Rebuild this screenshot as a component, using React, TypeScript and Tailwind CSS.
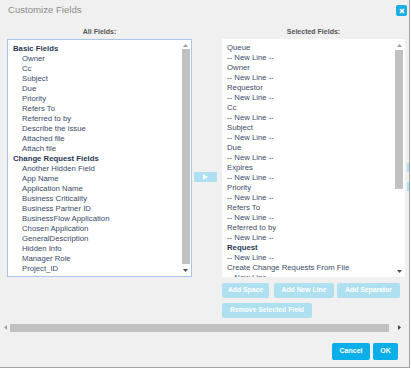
import React from "react";

const leftItems: { t: string; h?: boolean }[] = [
  { t: "Basic Fields", h: true },
  { t: "Owner" },
  { t: "Cc" },
  { t: "Subject" },
  { t: "Due" },
  { t: "Priority" },
  { t: "Refers To" },
  { t: "Referred to by" },
  { t: "Describe the issue" },
  { t: "Attached file" },
  { t: "Attach file" },
  { t: "Change Request Fields", h: true },
  { t: "Another Hidden Field" },
  { t: "App Name" },
  { t: "Application Name" },
  { t: "Business Criticality" },
  { t: "Business Partner ID" },
  { t: "BusinessFlow Application" },
  { t: "Chosen Application" },
  { t: "GeneralDescription" },
  { t: "Hidden Info" },
  { t: "Manager Role" },
  { t: "Project_ID" },
];

const rightItems: { t: string; b?: boolean }[] = [
  { t: "Queue" },
  { t: "-- New Line --" },
  { t: "Owner" },
  { t: "-- New Line --" },
  { t: "Requestor" },
  { t: "-- New Line --" },
  { t: "Cc" },
  { t: "-- New Line --" },
  { t: "Subject" },
  { t: "-- New Line --" },
  { t: "Due" },
  { t: "-- New Line --" },
  { t: "Expires" },
  { t: "-- New Line --" },
  { t: "Priority" },
  { t: "-- New Line --" },
  { t: "Refers To" },
  { t: "-- New Line --" },
  { t: "Referred to by" },
  { t: "-- New Line --" },
  { t: "Request", b: true },
  { t: "-- New Line --" },
  { t: "Create Change Requests From File" },
  { t: "-- New Line --" },
];

function Up() {
  return (
    <svg width="5" height="3" viewBox="0 0 5 3">
      <polygon points="0,3 5,3 2.5,0" fill="#a0a0a0" />
    </svg>
  );
}
function Down() {
  return (
    <svg width="5" height="3" viewBox="0 0 5 3">
      <polygon points="0,0 5,0 2.5,3" fill="#505050" />
    </svg>
  );
}

export default function App() {
  return (
    <div
      className="w-[411px] h-[369px] bg-white"
      style={{ fontFamily: '"Liberation Sans", Arial, sans-serif' }}
    >
      <div className="w-[410px] h-[368px] bg-[#f0f0f0] border-r border-b border-[#a3a3a3] overflow-hidden flex flex-col">
        {/* header */}
        <div className="h-[23px] shrink-0 flex items-start justify-between pl-[8px] pr-[2px]">
          <div className="mt-[4px] text-[9.6px] leading-[12px] text-[#8c8c8c]">
            Customize Fields
          </div>
          <div className="mt-[5px] w-[11px] h-[11px] shrink-0 rounded-[2px] bg-[#1aaee6] flex items-center justify-center">
            <svg width="6" height="6" viewBox="0 0 6 6">
              <path d="M1 1 L5 5 M5 1 L1 5" stroke="white" strokeWidth="1.6" />
            </svg>
          </div>
        </div>
        {/* column headers */}
        <div className="h-[16px] shrink-0 flex pl-[7px] text-[7px] font-bold text-[#555] leading-[17px]">
          <div className="w-[185px] shrink-0 text-center">All Fields:</div>
          <div className="w-[30px] shrink-0" />
          <div className="w-[183px] shrink-0 text-center">Selected Fields:</div>
        </div>
        {/* lists */}
        <div className="h-[238px] shrink-0 flex pl-[7px]">
          <div className="w-[185px] shrink-0 h-full border border-[#a9c4e8] bg-white flex">
            <div className="flex-1 pl-[5px] pt-[4px] overflow-hidden text-[7.75px] leading-[10px] text-[#3a4a68] whitespace-nowrap">
              {leftItems.map((it, i) => (
                <div
                  key={i}
                  className={it.h ? "font-bold text-[#2a3856] h-[10px]" : "pl-[9px] h-[10px]"}
                >
                  {it.t}
                </div>
              ))}
            </div>
            <div className="w-[11px] shrink-0 h-full flex flex-col items-center">
              <div className="h-[9px] flex items-center justify-center pt-[1px]">
                <Up />
              </div>
              <div className="w-[8px] h-[215px] bg-[#c1c1c1]" />
              <div className="flex-1 flex items-center justify-center">
                <Down />
              </div>
            </div>
          </div>
          <div className="w-[30px] shrink-0 pt-[133px] pl-[2px]">
            <div className="w-[23px] h-[10px] rounded-[1px] bg-[#aee0f2] flex items-center justify-center">
              <svg width="5" height="6" viewBox="0 0 5 6">
                <polygon points="0,0 5,3 0,6" fill="white" />
              </svg>
            </div>
          </div>
          <div className="w-[183px] shrink-0 h-full bg-white flex">
            <div className="flex-1 pl-[5px] pt-[4px] overflow-hidden text-[7.75px] leading-[10px] text-[#3a4a68] whitespace-nowrap">
              {rightItems.map((it, i) => (
                <div
                  key={i}
                  className={it.b ? "font-bold text-[#2a3856] h-[10px]" : "h-[10px]"}
                >
                  {it.t}
                </div>
              ))}
            </div>
            <div className="w-[10px] shrink-0 h-full flex flex-col items-start">
              <div className="w-[9px] h-[11px] flex items-center justify-center pt-[1px]">
                <Up />
              </div>
              <div className="w-[8px] h-[139px] bg-[#c1c1c1]" />
              <div className="flex-1" />
              <div className="w-[9px] h-[12px] flex items-center justify-center">
                <Down />
              </div>
            </div>
          </div>
          <div className="ml-[2px] shrink-0 pt-[124px] flex flex-col gap-[10px]">
            <div className="w-[12px] h-[9px] bg-[#aee0f2] rounded-[1px]" />
            <div className="w-[12px] h-[9px] bg-[#aee0f2] rounded-[1px]" />
          </div>
        </div>
        {/* action buttons */}
        <div className="pl-[222px] mt-[6px] shrink-0 flex text-[6.8px] font-bold text-white">
          <div className="w-[47px] shrink-0 h-[15px] rounded-[2px] bg-[#aee0f0] flex items-center justify-center">
            Add Space
          </div>
          <div className="ml-[5px] w-[60px] shrink-0 h-[15px] rounded-[2px] bg-[#aee0f0] flex items-center justify-center">
            Add New Line
          </div>
          <div className="ml-[3px] w-[63px] shrink-0 h-[15px] rounded-[2px] bg-[#aee0f0] flex items-center justify-center">
            Add Separator
          </div>
        </div>
        <div className="pl-[222px] mt-[5px] shrink-0 flex text-[6.8px] font-bold text-white">
          <div className="w-[90px] shrink-0 h-[15px] rounded-[2px] bg-[#aee0f0] flex items-center justify-center">
            Remove Selected Field
          </div>
        </div>
        {/* horizontal scrollbar */}
        <div className="mt-[5px] h-[9px] shrink-0 flex items-center">
          <div className="w-[10px] shrink-0 flex items-center justify-center">
            <svg width="3" height="5" viewBox="0 0 3 5">
              <polygon points="3,0 3,5 0,2.5" fill="#a0a0a0" />
            </svg>
          </div>
          <div className="w-[379px] shrink-0 h-[8px] bg-[#c1c1c1]" />
          <div className="flex-1 flex items-center justify-center">
            <svg width="3" height="5" viewBox="0 0 3 5">
              <polygon points="0,0 0,5 3,2.5" fill="#404040" />
            </svg>
          </div>
        </div>
        {/* footer */}
        <div className="mt-[11px] shrink-0 flex pl-[332px] text-[7px] font-bold text-white">
          <div className="w-[38px] shrink-0 h-[17px] rounded-[2px] bg-[#0aaee8] flex items-center justify-center">
            Cancel
          </div>
          <div className="ml-[3px] w-[25px] shrink-0 h-[17px] rounded-[2px] bg-[#0aaee8] flex items-center justify-center">
            OK
          </div>
        </div>
      </div>
    </div>
  );
}
